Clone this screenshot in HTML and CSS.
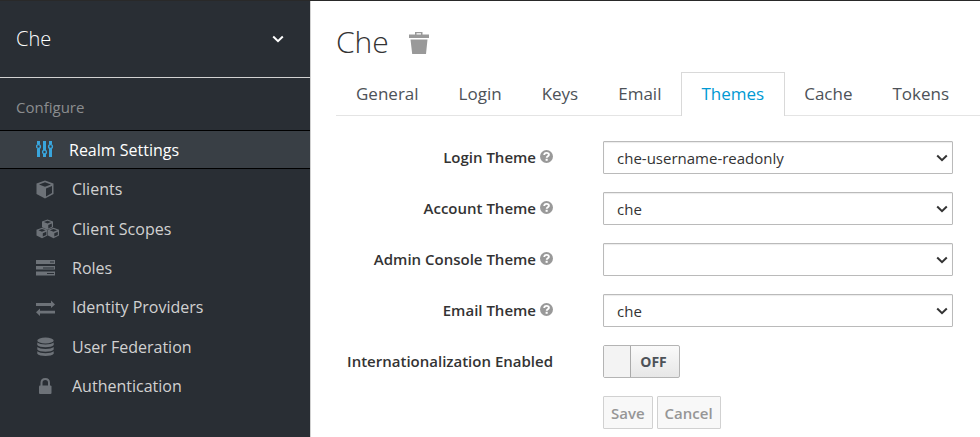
FILE: index.html
```html
<!DOCTYPE html>
<html lang="en">
<head>
<meta charset="utf-8">
<meta name="viewport" content="width=device-width, initial-scale=1">
<title>Che – Themes</title>
<link rel="stylesheet" href="styles.css">
</head>
<body>
<svg class="sprite" aria-hidden="true">
  <symbol id="chevron" viewBox="0 0 12 8"><path d="M1.2 1.5 6 6.2l4.800-4.700" fill="none" stroke="currentColor" stroke-width="2"/></symbol>
  <symbol id="help" viewBox="0 0 14 14"><circle cx="7.500" cy="6.500" r="6.500" fill="currentColor"/><path d="M5.200 5C5.300 3.500 6.400 2.900 7.500 2.900c1.300 0 2.400.7 2.400 1.900 0 1.500-2.100 1.500-2.200 3" fill="none" stroke="#fff" stroke-width="1.900"/><path d="M6.600 8.800h2.100v2H6.600z" fill="#fff"/></symbol>
</svg>
<div class="app">
  <aside class="sidebar">
    <button class="realm" type="button">Che
      <svg class="chevron" aria-hidden="true"><use href="#chevron"/></svg>
    </button>
    <nav class="menu" aria-label="Configure">
      <h2 class="menu-title">Configure</h2>
      <ul class="menu-list">
        <li><a class="menu-link active" href="#realm">
          <svg class="icon" viewBox="0 0 24 20" fill="none" stroke="currentColor"><path d="M2.500 1v3.500M2.500 8.500V17M8.500 1v9M8.500 14V17M14.500 1v3.500M14.500 8.500V17" stroke-width="3"/><circle cx="2.500" cy="6.500" r="1.900" stroke-width="1.400"/><circle cx="8.500" cy="12" r="1.900" stroke-width="1.400"/><circle cx="14.500" cy="6.500" r="1.900" stroke-width="1.400"/></svg>
          Realm Settings</a></li>
        <li><a class="menu-link" href="#clients">
          <svg class="icon" viewBox="0 0 24 20"><path d="M9 1.500 17.500 4.500v10.500L9 19.500 .5 15V4.500z" fill="currentColor"/><path d="M9 3.200 15 5.500 9 7.800 3 5.500zM10 9.500l6-2.400v7L10 17.400z" fill="#292e34"/></svg>
          Clients</a></li>
        <li><a class="menu-link" href="#scopes">
          <svg class="icon" viewBox="0 0 24 20"><g fill="currentColor"><path d="m11.500.5 5.500 2v5.700l-5.500 2.600L6 8.200V2.500z"/><path d="m6 8.700 5.500 2v5.800L6 19.200.5 16.500v-5.800zM17.500 8.700l5.500 2v5.800l-5.500 2.700-5.500-2.700v-5.800z"/></g><path d="m11.500 1.700 3.600 1.400-3.600 1.400-3.600-1.400zM12.300 6l3.500-1.500v3.200l-3.500 1.700zM6 9.900l3.600 1.400L6 12.700l-3.600-1.400zM6.800 14.200l3.500-1.500v3.200l-3.500 1.700zM17.500 9.900l3.600 1.400-3.600 1.400-3.600-1.400zM18.300 14.200l3.500-1.500v3.200l-3.500 1.700z" fill="#292e34"/></svg>
          Client Scopes</a></li>
        <li><a class="menu-link" href="#roles">
          <svg class="icon" viewBox="0 0 24 20"><path d="M0 2h19v4H0zM0 8h19v3.500H0zM0 13.500h19v4H0z" fill="currentColor"/><path d="M14 3.500h4v1h-4zM7 9.500h11v1H7zM11 15h7v1h-7z" fill="#292e34"/></svg>
          Roles</a></li>
        <li><a class="menu-link" href="#identity">
          <svg class="icon" viewBox="0 0 24 20"><path d="M0 6h15V3.500L19 7.500 15 11V9H0zM19 16.500H4V19L0 15.200 4 11.500v2.300h15z" fill="currentColor"/></svg>
          Identity Providers</a></li>
        <li><a class="menu-link" href="#federation">
          <svg class="icon" viewBox="0 0 24 20" fill="currentColor"><ellipse cx="9.500" cy="3.500" rx="8.200" ry="3"/><path d="M1.300 5.600c2.500 2.500 13.900 2.500 16.400 0v2.500c-2 3-14.400 3-16.400 0zM1.300 10c2.500 2.500 13.900 2.500 16.400 0v2.400c-2 3-14.400 3-16.400 0zM1.300 14.300c2.500 2.500 13.900 2.500 16.400 0v2.400c-2 3-14.400 3-16.400 0z"/></svg>
          User Federation</a></li>
        <li><a class="menu-link" href="#authentication">
          <svg class="icon" viewBox="0 0 24 20"><path d="M5.500 10V6.700c0-5 7.500-5 7.500 0V10" fill="none" stroke="currentColor" stroke-width="2"/><rect x="3" y="9.500" width="12.500" height="8.500" rx="1" fill="currentColor"/></svg>
          Authentication</a></li>
      </ul>
    </nav>
  </aside>
  <main class="content">
    <header class="heading">
      <h1>Che</h1>
      <button class="delete" type="button" aria-label="Delete realm">
        <svg class="trash" viewBox="0 0 20 24" fill="currentColor"><path d="M6 4.500V2h7.500v2.500H20V8H0V4.500zM7.500 4.500H12V3.200H7.500zM1.500 9.500h17L17 24H3.200z" fill-rule="evenodd"/></svg>
      </button>
    </header>
    <nav class="tabs" aria-label="Realm settings">
      <a class="tab" href="#general">General</a>
      <a class="tab" href="#login">Login</a>
      <a class="tab" href="#keys">Keys</a>
      <a class="tab" href="#email">Email</a>
      <a class="tab current" href="#themes" aria-current="page">Themes</a>
      <a class="tab" href="#cache">Cache</a>
      <a class="tab" href="#tokens">Tokens</a>
    </nav>
    <form class="form">
      <div class="label"><label for="login-theme">Login Theme</label><svg class="help" aria-hidden="true"><use href="#help"/></svg></div>
      <div class="select"><select id="login-theme"><option>che-username-readonly</option></select><svg class="chevron" aria-hidden="true"><use href="#chevron"/></svg></div>
      <div class="label"><label for="account-theme">Account Theme</label><svg class="help" aria-hidden="true"><use href="#help"/></svg></div>
      <div class="select"><select id="account-theme"><option>che</option></select><svg class="chevron" aria-hidden="true"><use href="#chevron"/></svg></div>
      <div class="label"><label for="admin-theme">Admin Console Theme</label><svg class="help" aria-hidden="true"><use href="#help"/></svg></div>
      <div class="select"><select id="admin-theme"><option></option></select><svg class="chevron" aria-hidden="true"><use href="#chevron"/></svg></div>
      <div class="label"><label for="email-theme">Email Theme</label><svg class="help" aria-hidden="true"><use href="#help"/></svg></div>
      <div class="select"><select id="email-theme"><option>che</option></select><svg class="chevron" aria-hidden="true"><use href="#chevron"/></svg></div>
      <div class="label"><label for="i18n">Internationalization Enabled</label></div>
      <div class="switch"><input id="i18n" type="checkbox" role="switch"><span class="knob"></span><span class="state">OFF</span></div>
      <div class="actions">
        <button type="submit" disabled>Save</button>
        <button type="reset" disabled>Cancel</button>
      </div>
    </form>
  </main>
</div>
</body>
</html>
```

FILE: styles.css
```css
* { box-sizing: border-box; }

body {
  margin: 0;
  background: #fff;
  color: #333;
  font: 15px/20px "Open Sans", sans-serif;
}

button, select { font: inherit; }
a { color: inherit; text-decoration: none; }
.sprite { display: none; }

.app {
  display: grid;
  grid-template-columns: 311px minmax(0, 1fr);
  min-height: 100vh;
  border-top: 1px solid #292929;
}

.sidebar {
  background: #292e34;
  border-right: 1px solid #d1d1d1;
}

.realm {
  display: flex;
  align-items: center;
  justify-content: space-between;
  width: 100%;
  height: 77px;
  padding: 0 26px 0 16px;
  border: 0;
  border-bottom: 1px solid #d1d1d1;
  background: none;
  color: #fff;
  font-size: 20px;
  font-weight: 300;
}

.chevron { width: 12px; height: 8px; }

.menu-title {
  margin: 0;
  padding: 19px 16px 13px;
  color: #8b8d8f;
  font-size: 15px;
  font-weight: 400;
  line-height: 20px;
}

.menu-list {
  display: grid;
  grid-auto-rows: 1fr;
  min-height: 276px;
  margin: 0;
  padding: 0;
  list-style: none;
}

.menu-link {
  display: flex;
  align-items: center;
  gap: 12px;
  height: 100%;
  padding-left: 36px;
  color: #d1d1d1;
  font-size: 16px;
}

.menu-link.active {
  gap: 9px;
  border: solid #000;
  border-width: 1px 0;
  background: #393f45;
  color: #fff;
}

.icon { width: 24px; height: 20px; color: #6d7278; }
.active .icon { color: #39a5dc; }

.content { padding: 20px 0 0 25px; }

.heading { display: flex; align-items: center; gap: 20px; }

h1 {
  margin: 0;
  font-size: 30px;
  font-weight: 300;
  line-height: 42px;
}

.delete {
  display: flex;
  padding: 0;
  border: 0;
  background: none;
  color: #999;
}

.trash { width: 20px; height: 24px; }

.tabs {
  display: flex;
  margin-top: 9px;
  border-bottom: 1px solid #e4e4e4;
}

.tab {
  margin: 0 -1px -1px 0;
  padding: 7px 20px 9px 19px;
  border: 1px solid transparent;
  border-bottom: 0;
  color: #4d5258;
  font-size: 17px;
  line-height: 27px;
}

.tab.current {
  border-color: #d9d9d9;
  background: #fff;
  color: #0099d3;
}

.form {
  display: grid;
  grid-template-columns: 217px minmax(0, 1fr);
  gap: 18px 50px;
  padding: 25px 27px 7px 0;
}

.label {
  display: flex;
  align-items: center;
  justify-content: flex-end;
  gap: 3px;
  padding-bottom: 1px;
  font-weight: 600;
  white-space: nowrap;
}

.help { width: 14px; height: 14px; color: #999; }

.select { position: relative; }

.select select {
  display: block;
  width: 100%;
  height: 33px;
  padding: 0 30px 0 13px;
  border: 1px solid #bababa;
  border-radius: 1px;
  background: #fff;
  box-shadow: inset 0 1px 1px rgba(0, 0, 0, .08);
  color: #333;
  appearance: none;
}

.select .chevron {
  position: absolute;
  top: 13px;
  right: 5px;
  pointer-events: none;
}

.switch {
  position: relative;
  display: flex;
  width: 77px;
  height: 33px;
  border: 1px solid #b4b4b4;
  border-radius: 2px;
  background: linear-gradient(#fafafa, #e7e7e7);
}

.switch input {
  position: absolute;
  inset: 0;
  width: 100%;
  height: 100%;
  margin: 0;
  opacity: 0;
}

.knob { width: 27px; border-right: 1px solid #aaa; background: #f3f3f3; }

.state {
  flex: 1;
  padding-right: 3px;
  color: #4d5258;
  font-size: 14px;
  font-weight: 700;
  line-height: 31px;
  text-align: center;
}

.actions { display: flex; grid-column: 2; gap: 4px; }

.actions button {
  height: 33px;
  padding: 0 7px;
  border: 1px solid #d1d1d1;
  border-radius: 1px;
  background: #f8f8f8;
  color: #969696;
  font-weight: 600;
}
```
